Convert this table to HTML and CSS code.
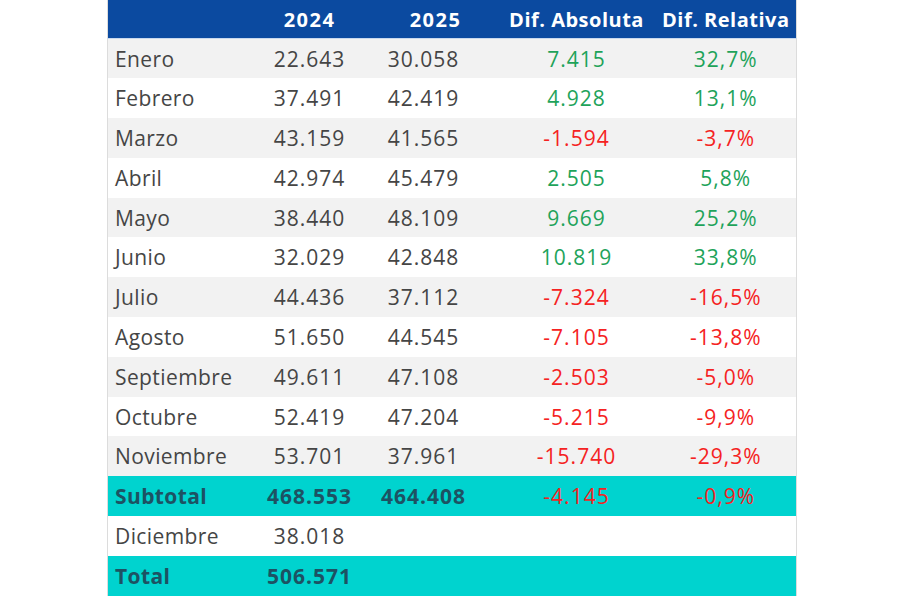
FILE: index.html
```html
<!DOCTYPE html>
<html lang="es">
<head>
<meta charset="utf-8">
<title>Tabla</title>
<link rel="stylesheet" href="styles.css">
</head>
<body>
<div class="wrap">
<table class="data">
  <colgroup>
    <col class="c1"><col class="c2"><col class="c3"><col class="c4"><col class="c5">
  </colgroup>
  <thead>
    <tr><th></th><th class="yr">2024</th><th class="yr">2025</th><th>Dif. Absoluta</th><th>Dif. Relativa</th></tr>
  </thead>
  <tbody>
    <tr class="alt"><td>Enero</td><td>22.643</td><td class="v25">30.058</td><td class="pos">7.415</td><td class="pos">32,7%</td></tr>
    <tr><td>Febrero</td><td>37.491</td><td class="v25">42.419</td><td class="pos">4.928</td><td class="pos">13,1%</td></tr>
    <tr class="alt"><td>Marzo</td><td>43.159</td><td class="v25">41.565</td><td class="neg">-1.594</td><td class="neg">-3,7%</td></tr>
    <tr><td>Abril</td><td>42.974</td><td class="v25">45.479</td><td class="pos">2.505</td><td class="pos">5,8%</td></tr>
    <tr class="alt"><td>Mayo</td><td>38.440</td><td class="v25">48.109</td><td class="pos">9.669</td><td class="pos">25,2%</td></tr>
    <tr><td>Junio</td><td>32.029</td><td class="v25">42.848</td><td class="pos">10.819</td><td class="pos">33,8%</td></tr>
    <tr class="alt"><td>Julio</td><td>44.436</td><td class="v25">37.112</td><td class="neg">-7.324</td><td class="neg">-16,5%</td></tr>
    <tr><td>Agosto</td><td>51.650</td><td class="v25">44.545</td><td class="neg">-7.105</td><td class="neg">-13,8%</td></tr>
    <tr class="alt"><td>Septiembre</td><td>49.611</td><td class="v25">47.108</td><td class="neg">-2.503</td><td class="neg">-5,0%</td></tr>
    <tr><td>Octubre</td><td>52.419</td><td class="v25">47.204</td><td class="neg">-5.215</td><td class="neg">-9,9%</td></tr>
    <tr class="alt"><td>Noviembre</td><td>53.701</td><td class="v25">37.961</td><td class="neg">-15.740</td><td class="neg">-29,3%</td></tr>
    <tr class="sum"><td>Subtotal</td><td>468.553</td><td class="v25">464.408</td><td class="neg">-4.145</td><td class="neg">-0,9%</td></tr>
    <tr><td>Diciembre</td><td>38.018</td><td class="v25"></td><td></td><td></td></tr>
    <tr class="sum"><td>Total</td><td>506.571</td><td class="v25"></td><td></td><td></td></tr>
  </tbody>
</table>
</div>
</body>
</html>
```
FILE: styles.css
```css
html, body {
  margin: 0;
  padding: 0;
  background: #ffffff;
}
.wrap {
  padding-left: 107px;
}
.data {
  border-collapse: collapse;
  table-layout: fixed;
  width: 689px;
  font-family: "Open Sans", Lato, sans-serif;
  color: #454545;
  border-left: 1px solid #dcdcdc;
  border-right: 1px solid #dcdcdc;
}
.c1 { width: 138px; }
.c2 { width: 128px; }
.c3 { width: 124px; }
.c4 { width: 158px; }
.c5 { width: 141px; }
.data th {
  background: #0b4aa0;
  color: #ffffff;
  font-weight: 700;
  font-size: 20px;
  height: 38px;
  padding: 0;
  text-align: center;
  border-bottom: 1px solid #c9d9ee;
  letter-spacing: 0.5px;
}
.data th.yr { letter-spacing: 1.5px; }
.data td {
  height: 39.8px;
  padding: 0;
  font-size: 21px;
  letter-spacing: 1px;
  text-align: center;
  box-sizing: border-box;
}
.data td:first-child {
  text-align: left;
  padding-left: 7px;
  letter-spacing: 0.4px;
}
.data td.v25 { padding-right: 24px; }
.data tr.alt td { background: #f2f2f2; }
.data td.pos { color: #1ea35a; }
.data td.neg { color: #f52222; }
.data tr.sum td {
  background: #00d3cf;
  font-weight: 700;
  color: #1d5263;
}
.data tr.sum td.neg { color: #f52222; font-weight: 400; }
```
